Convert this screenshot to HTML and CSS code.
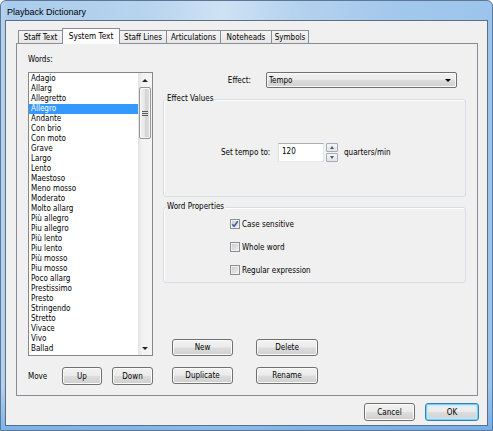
FILE: index.html
```html
<!DOCTYPE html>
<html>
<head>
<meta charset="utf-8">
<title>Playback Dictionary</title>
<link rel="stylesheet" href="styles.css">
</head>
<body>
<div class="window">
  <div class="titlebar"><span class="title">Playback Dictionary</span></div>
  <div class="client">
    <div class="tabstrip">
      <div class="tab w1">Staff Text</div>
      <div class="tab w2 active">System Text</div>
      <div class="tab w3">Staff Lines</div>
      <div class="tab w4">Articulations</div>
      <div class="tab w5">Noteheads</div>
      <div class="tab w6">Symbols</div>
    </div>
    <div class="panel">
      <div class="leftcol">
        <div class="words-label">Words:</div>
        <div class="listbox">
          <div class="items">
            <div class="item">Adagio</div>
            <div class="item">Allarg</div>
            <div class="item">Allegretto</div>
            <div class="item selected">Allegro</div>
            <div class="item">Andante</div>
            <div class="item">Con brio</div>
            <div class="item">Con moto</div>
            <div class="item">Grave</div>
            <div class="item">Largo</div>
            <div class="item">Lento</div>
            <div class="item">Maestoso</div>
            <div class="item">Meno mosso</div>
            <div class="item">Moderato</div>
            <div class="item">Molto allarg</div>
            <div class="item">Più allegro</div>
            <div class="item">Piu allegro</div>
            <div class="item">Più lento</div>
            <div class="item">Piu lento</div>
            <div class="item">Più mosso</div>
            <div class="item">Piu mosso</div>
            <div class="item">Poco allarg</div>
            <div class="item">Prestissimo</div>
            <div class="item">Presto</div>
            <div class="item">Stringendo</div>
            <div class="item">Stretto</div>
            <div class="item">Vivace</div>
            <div class="item">Vivo</div>
            <div class="item">Ballad</div>
          </div>
          <div class="vscroll">
            <div class="sarrow"><span class="tri-up"></span></div>
            <div class="sthumb"><span class="grip"></span></div>
            <div class="strack"></div>
            <div class="sarrow"><span class="tri-down"></span></div>
          </div>
        </div>
        <div class="moverow">
          <span class="move-label">Move</span>
          <button class="btn btn-up">Up</button>
          <button class="btn btn-down">Down</button>
        </div>
      </div>
      <div class="rightcol">
        <div class="effect-row">
          <span class="effect-label">Effect:</span>
          <div class="combo"><span class="combo-text">Tempo</span><span class="combo-arrow"></span></div>
        </div>
        <div class="group g1">
          <div class="group-title">Effect Values</div>
          <div class="tempo-row">
            <span class="tempo-label">Set tempo to:</span>
            <div class="numinput">120</div>
            <div class="spinner">
              <div class="spin"><span class="stri-up"></span></div>
              <div class="spin"><span class="stri-down"></span></div>
            </div>
            <span class="unit">quarters/min</span>
          </div>
        </div>
        <div class="group g2">
          <div class="group-title">Word Properties</div>
          <div class="check-row first">
            <span class="cb"><svg width="8" height="8" viewBox="0 0 8 8"><path d="M1.2 4.2 L3.1 6.3 L6.9 1.3" fill="none" stroke="#3f5f9a" stroke-width="1.5"/></svg></span>
            <span class="cb-text">Case sensitive</span>
          </div>
          <div class="check-row">
            <span class="cb"></span>
            <span class="cb-text">Whole word</span>
          </div>
          <div class="check-row">
            <span class="cb"></span>
            <span class="cb-text">Regular expression</span>
          </div>
        </div>
        <div class="action-grid">
          <button class="btn">New</button>
          <button class="btn">Delete</button>
          <button class="btn">Duplicate</button>
          <button class="btn">Rename</button>
        </div>
      </div>
    </div>
    <div class="footer">
      <button class="btn btn-cancel">Cancel</button>
      <button class="btn btn-ok">OK</button>
    </div>
  </div>
</div>
</body>
</html>
```

FILE: styles.css
```css
* { box-sizing: border-box; }

html, body {
  margin: 0;
  padding: 0;
  background: #ffffff;
}

body {
  width: 493px;
  height: 431px;
  overflow: hidden;
  font-family: "DejaVu Sans Condensed", "DejaVu Sans", sans-serif;
  font-stretch: condensed;
  font-size: 8px;
  color: #000;
}

.window {
  width: 493px;
  height: 431px;
  border: 1px solid #5d7796;
  border-radius: 6px 6px 0 0;
  background:
    linear-gradient(180deg, rgba(255,255,255,0) 0%, rgba(255,255,255,0) 90%, rgba(90,160,230,0.6) 100%),
    linear-gradient(90deg, #b7d3ee 0%, #a9cbec 1.5%, #b8d4ef 30%, #cfe2f4 45%, #b5d2ee 60%, #a3c8ec 80%, #9cc4ec 100%);
  display: flex;
  flex-direction: column;
}

.titlebar {
  height: 19px;
  padding: 3px 0 0 6px;
  display: flex;
  align-items: center;
  font-family: "Liberation Sans", Arial, sans-serif;
  font-stretch: normal;
  font-size: 9px;
  color: #000;
}

.client {
  margin: 0 4px 4px 4px;
  height: 406px;
  border: 1px solid #5b6e83;
  background: #f0f0f0;
  display: flex;
  flex-direction: column;
}

/* tabs */
.tabstrip {
  height: 22px;
  padding-left: 12px;
  display: flex;
  align-items: flex-end;
  position: relative;
  z-index: 1;
}

.tab {
  height: 13px;
  margin-right: -1px;
  border: 1px solid #898c95;
  border-bottom: none;
  background: linear-gradient(#f5f5f5, #e6e6e6);
  display: flex;
  align-items: center;
  justify-content: center;
  line-height: 10px;
  padding-top: 1px;
}

.tab.active {
  height: 16px;
  margin-bottom: -1px;
  background: #fcfcfc;
  padding-top: 0;
  padding-bottom: 2px;
  position: relative;
  z-index: 2;
  font-size: 8.2px;
}

.w1 { width: 45px; }
.w2 { width: 58px; }
.w3 { width: 48px; }
.w4 { width: 55px; }
.w5 { width: 52px; }
.w6 { width: 38px; }

.panel {
  margin-left: 10px;
  width: 462px;
  height: 353px;
  border: 1px solid #898c95;
  background: #f0f0f0;
  display: flex;
  padding-left: 11px;
}

/* left column */
.leftcol {
  width: 125px;
  padding-top: 11px;
  display: flex;
  flex-direction: column;
}

.words-label {
  line-height: 10px;
  height: 10px;
  margin-bottom: 7px;
}

.listbox {
  height: 284px;
  border: 1px solid #828790;
  background: #fff;
  display: flex;
}

.items {
  width: 109px;
  padding-top: 1px;
  overflow: hidden;
}

.item {
  height: 10px;
  line-height: 10px;
  padding-left: 2px;
  white-space: nowrap;
  color: #000;
}

.item.selected {
  background: #3399ff;
  color: #fff;
}

.vscroll {
  width: 14px;
  display: flex;
  flex-direction: column;
  background: linear-gradient(90deg, #e3e3e3, #f2f2f2 30%, #f5f5f5);
}

.sarrow {
  height: 14px;
  display: flex;
  align-items: center;
  justify-content: center;
}

.tri-up, .tri-down {
  width: 0;
  height: 0;
  border-left: 3px solid transparent;
  border-right: 3px solid transparent;
}

.tri-up { border-bottom: 3px solid #222; }
.tri-down { border-top: 3px solid #222; }

.sthumb {
  height: 52px;
  margin: 0 1px;
  border: 1px solid #959595;
  border-radius: 2px;
  background: linear-gradient(90deg, #f2f2f2, #e6e6e6 45%, #d6d6d6 55%, #dcdcdc);
  box-shadow: inset 0 0 0 1px #f8f8f8;
  display: flex;
  align-items: center;
  justify-content: center;
}

.grip {
  width: 6px;
  height: 5px;
  background: repeating-linear-gradient(180deg, #5a5a5a 0, #5a5a5a 1px, #e0e0e0 1px, #e0e0e0 2px);
}

.strack { flex: 1; }

.moverow {
  margin-top: 11px;
  height: 18px;
  display: flex;
  align-items: center;
}

.move-label { width: 34px; }

.btn {
  font-family: "DejaVu Sans Condensed", "DejaVu Sans", sans-serif;
  font-stretch: condensed;
  font-size: 8px;
  color: #000;
  padding: 0;
  margin: 0;
  border: 1px solid #707070;
  border-radius: 3px;
  background: linear-gradient(#f2f2f2 0%, #ebebeb 48%, #dddddd 52%, #cfcfcf 100%);
  box-shadow: inset 0 0 0 1px #fbfbfb;
  height: 17px;
  line-height: 13px;
}

.btn-up { width: 40px; height: 18px; }
.btn-down { width: 41px; height: 18px; margin-left: 10px; }

/* right column */
.rightcol {
  margin-left: 10px;
  width: 303px;
  padding-top: 28px;
  display: flex;
  flex-direction: column;
}

.effect-row {
  height: 16px;
  display: flex;
  align-items: center;
}

.effect-label {
  width: 88px;
  text-align: right;
}

.combo {
  margin-left: 15px;
  width: 191px;
  height: 16px;
  border: 1px solid #707070;
  border-radius: 2px;
  background: linear-gradient(#f2f2f2 0%, #ebebeb 48%, #dddddd 52%, #cfcfcf 100%);
  box-shadow: inset 0 0 0 1px #fbfbfb;
  display: flex;
  align-items: center;
  justify-content: space-between;
  padding: 0 5px 0 2px;
}

.combo-arrow {
  width: 0;
  height: 0;
  border-left: 3px solid transparent;
  border-right: 3px solid transparent;
  border-top: 3px solid #000;
}

.group {
  border: 1px solid #d5dfe5;
  border-radius: 3px;
  box-shadow: inset 1px 1px 0 #fff;
}

.group-title {
  margin-top: -6px;
  margin-left: 2px;
  padding: 0 1px;
  width: fit-content;
  height: 10px;
  line-height: 10px;
  background: #f0f0f0;
}

.g1 {
  margin-top: 11px;
  height: 98px;
}

.tempo-row {
  margin-top: 39px;
  height: 19px;
  padding-left: 57px;
  display: flex;
  align-items: center;
}

.tempo-label { width: 57px; white-space: nowrap; }

.numinput {
  width: 46px;
  height: 19px;
  background: #fff;
  border: 1px solid #e3e9ef;
  border-top-color: #abadb3;
  border-left-color: #dbdfe6;
  padding-left: 3px;
  line-height: 15px;
}

.spinner {
  margin-left: 2px;
  width: 12px;
  height: 19px;
  display: flex;
  flex-direction: column;
  gap: 1px;
}

.spin {
  flex: 1;
  border: 1px solid #a6adb6;
  border-radius: 1px;
  background: linear-gradient(#f6f6f6, #e2e4e7);
  display: flex;
  align-items: center;
  justify-content: center;
}

.stri-up, .stri-down {
  width: 0;
  height: 0;
  border-left: 2.5px solid transparent;
  border-right: 2.5px solid transparent;
}

.stri-up { border-bottom: 3px solid #4b5a72; }
.stri-down { border-top: 3px solid #4b5a72; }

.unit { margin-left: 6px; }

.g2 {
  margin-top: 10px;
  height: 76px;
}

.check-row {
  height: 12px;
  margin-top: 11px;
  padding-left: 66px;
  display: flex;
  align-items: center;
}

.check-row.first { margin-top: 6px; }

.cb {
  width: 10px;
  height: 10px;
  border: 1px solid #8e8f8f;
  background: linear-gradient(135deg, #c6cbd2, #eeeeee);
  box-shadow: inset 0 0 0 1px #f0f0f0;
  display: flex;
  align-items: center;
  justify-content: center;
}

.cb-text { margin-left: 2px; }

.action-grid {
  margin-top: 56px;
  margin-left: 9px;
  display: grid;
  grid-template-columns: 61px 62px;
  grid-auto-rows: 17px;
  column-gap: 23px;
  row-gap: 11px;
}

.action-grid .btn { width: 100%; }

/* footer */
.footer {
  margin-top: 7px;
  height: 18px;
  padding-right: 8px;
  display: flex;
  justify-content: flex-end;
  gap: 10px;
}

.btn-cancel { width: 51px; height: 18px; }

.btn-ok {
  width: 54px;
  height: 18px;
  border-color: #3c7fb1;
  box-shadow: inset 0 0 0 1px #6fd4f8, inset 0 0 2px 2px #bfeafb;
}
```
